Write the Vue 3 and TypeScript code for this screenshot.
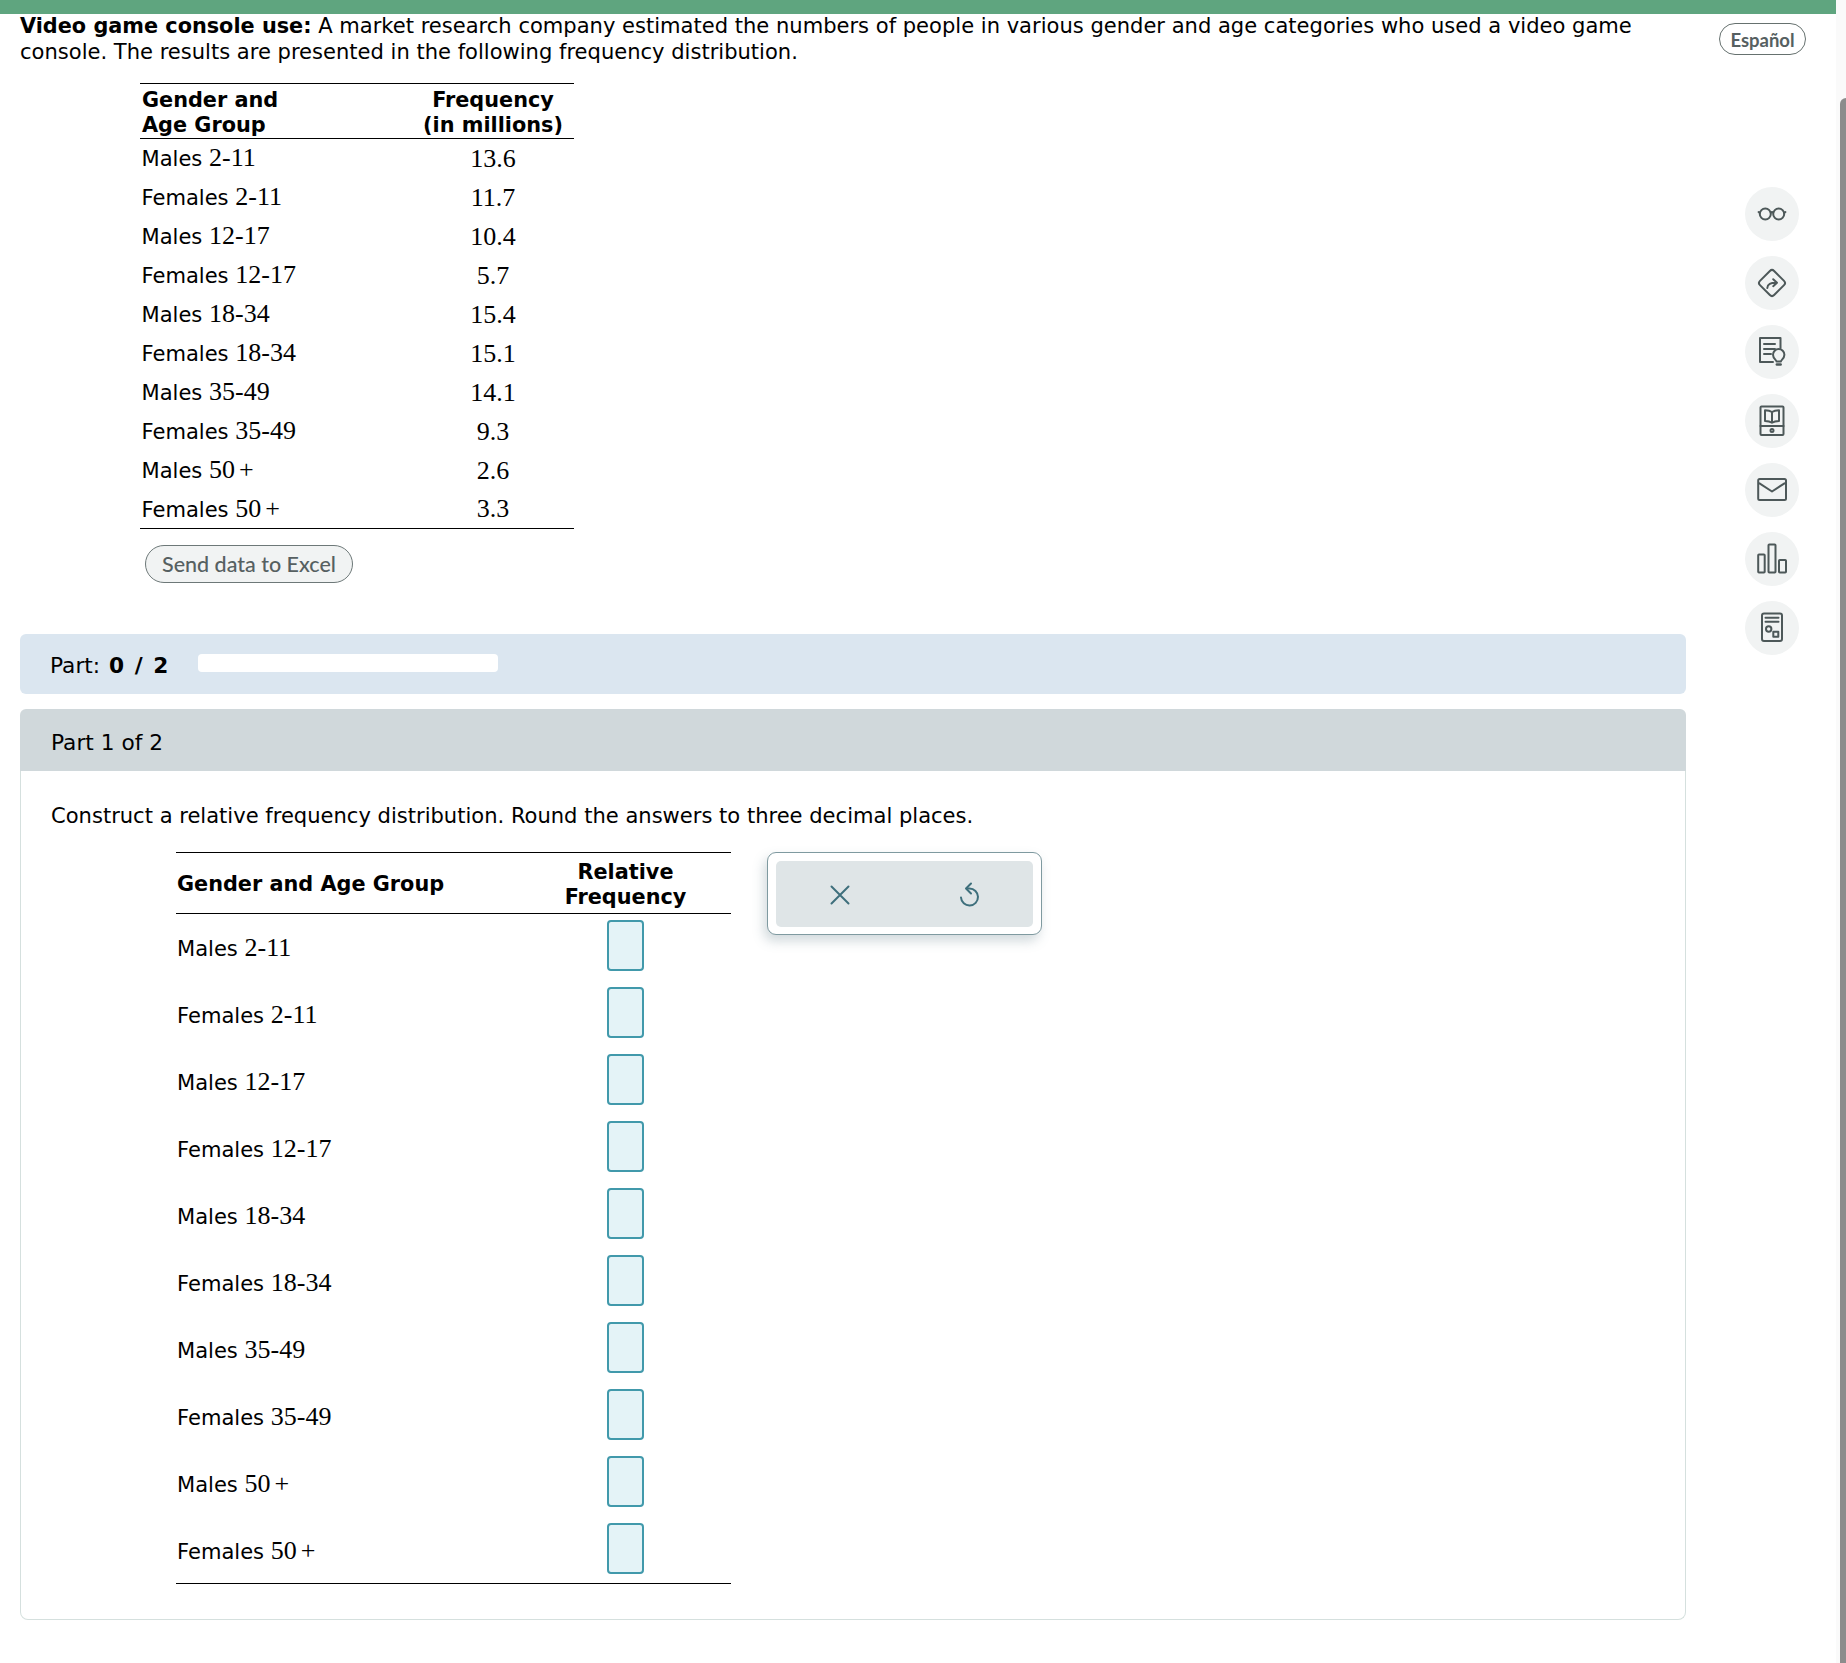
<script setup lang="ts">
interface Row { group: string; range: string; plus: boolean; freq: string }
const rows: Row[] = [
  { group: 'Males', range: '2-11', plus: false, freq: '13.6' },
  { group: 'Females', range: '2-11', plus: false, freq: '11.7' },
  { group: 'Males', range: '12-17', plus: false, freq: '10.4' },
  { group: 'Females', range: '12-17', plus: false, freq: '5.7' },
  { group: 'Males', range: '18-34', plus: false, freq: '15.4' },
  { group: 'Females', range: '18-34', plus: false, freq: '15.1' },
  { group: 'Males', range: '35-49', plus: false, freq: '14.1' },
  { group: 'Females', range: '35-49', plus: false, freq: '9.3' },
  { group: 'Males', range: '50', plus: true, freq: '2.6' },
  { group: 'Females', range: '50', plus: true, freq: '3.3' },
]
</script>

<template>
  <div class="screen">
    <div class="page">
      <div class="topbar"></div>
      <div class="columns">
        <main class="content">
          <p class="intro"><b>Video game console use:</b> A market research company estimated the numbers of people in various gender and age categories who used a video game console. The results are presented in the following frequency distribution.</p>

          <table class="data">
            <colgroup><col class="d1" /><col class="d2" /></colgroup>
            <thead>
              <tr>
                <th class="left">Gender and<br />Age Group</th>
                <th>Frequency<br />(in millions)</th>
              </tr>
            </thead>
            <tbody>
              <tr v-for="r in rows" :key="r.group + r.range">
                <td class="left">{{ r.group }} <span class="num">{{ r.range }}</span><span v-if="r.plus" class="num plus">+</span></td>
                <td class="center num">{{ r.freq }}</td>
              </tr>
            </tbody>
          </table>

          <button class="excel" type="button">Send data to Excel</button>

          <div class="progress">
            <span class="progress-label">Part: <b class="count">0 / 2</b></span>
            <div class="track"></div>
          </div>

          <section class="part">
            <div class="part-head">Part 1 of 2</div>
            <div class="part-body">
              <p class="prompt">Construct a relative frequency distribution. Round the answers to three decimal places.</p>
              <div class="answer">
                <table class="entry">
                  <colgroup><col class="e1" /><col class="e2" /></colgroup>
                  <thead>
                    <tr>
                      <th class="left">Gender and Age Group</th>
                      <th>Relative<br />Frequency</th>
                    </tr>
                  </thead>
                  <tbody>
                    <tr v-for="r in rows" :key="r.group + r.range">
                      <td class="left label">{{ r.group }} <span class="num">{{ r.range }}</span><span v-if="r.plus" class="num plus">+</span></td>
                      <td class="cell"><input class="box" type="text" :aria-label="r.group + ' ' + r.range" /></td>
                    </tr>
                  </tbody>
                </table>

                <div class="tools">
                  <div class="tools-inner">
                    <button class="tool" type="button" aria-label="Clear">
                      <svg width="24" height="24" viewBox="0 0 24 24" fill="none" stroke="#3e6f7c" stroke-width="2" stroke-linecap="round"><path d="M3.500 3.500 20.500 20.500M20.500 3.500 3.500 20.500" /></svg>
                    </button>
                    <button class="tool" type="button" aria-label="Undo">
                      <svg width="24" height="28" viewBox="0 0 24 28" fill="none" stroke="#3e6f7c" stroke-width="2" stroke-linecap="round" stroke-linejoin="round"><path d="M11 7.500h1.500a8.500 8.500 0 1 1-8.500 9" /><path d="M14 2.500 9 7.500l5 5" /></svg>
                    </button>
                  </div>
                </div>
              </div>
            </div>
          </section>
        </main>

        <aside class="side">
          <button class="lang" type="button">Español</button>
          <div class="icons">
            <button class="round" type="button" aria-label="Reader">
              <svg viewBox="0 0 32 32" class="ic"><circle cx="9.300" cy="16" r="5.500" /><circle cx="22.700" cy="16" r="5.500" /><path d="M14.800 14.600q1.200-1 2.400 0M3.800 14.800 2.600 14M28.200 14.800l1.200-.8" /></svg>
            </button>
            <button class="round" type="button" aria-label="Directions">
              <svg viewBox="0 0 32 32" class="ic"><rect x="6" y="6" width="20" height="20" rx="3" transform="rotate(45 16 16)" /><path d="M11.300 21q.2-5.600 9.500-5.200M17.200 12.200l3.800 3.600-3.800 3.400" /></svg>
            </button>
            <button class="round" type="button" aria-label="Hint">
              <svg viewBox="0 0 32 32" class="ic"><path d="M24.500 12V2H4v24h13" /><path d="M8 8h11M8 13h11M8 18h7" /><path d="M20.500 25.500c0-1.600-3.500-2.800-3.500-6.700a5.700 5.700 0 0 1 11.400 0c0 3.900-3.500 5.100-3.500 6.700z" /><path d="M20.800 28.500h3.900" stroke-width="2.400" /></svg>
            </button>
            <button class="round" type="button" aria-label="Textbook">
              <svg viewBox="0 0 32 32" class="ic"><rect x="4.500" y="1.500" width="23" height="28.500" rx="1" /><path d="M4.500 21h23" /><circle cx="16" cy="25.500" r="1.500" /><path d="M16 7c-2-1.500-4-1.800-7-1.800V16c3 0 5 .4 7 1.800 2-1.400 4-1.800 7-1.800V5.200c-3 0-5 .3-7 1.800zM16 7v10.800" /></svg>
            </button>
            <button class="round" type="button" aria-label="Message">
              <svg viewBox="0 0 32 32" class="ic"><rect x="2.200" y="5" width="27.800" height="21" rx="1.500" /><path d="M3.500 9.300 16 17.500l12.500-8.200" /></svg>
            </button>
            <button class="round" type="button" aria-label="Statistics">
              <svg viewBox="0 0 32 32" class="ic"><rect x="2.200" y="11.500" width="6.500" height="18" rx=".8" /><rect x="12.500" y="1.500" width="7" height="28" rx=".8" /><rect x="23" y="17" width="7" height="12.500" rx=".8" /></svg>
            </button>
            <button class="round" type="button" aria-label="Data">
              <svg viewBox="0 0 32 32" class="ic"><rect x="6" y="1.500" width="20" height="27.500" rx="2" /><path d="M9.500 5.800h13M9.500 9.800h13" /><circle cx="12.700" cy="17" r="2.700" /><rect x="17.300" y="19.700" width="5" height="5" /></svg>
            </button>
          </div>
        </aside>
      </div>
    </div>
    <div class="scrollbar"><div class="thumb"></div></div>
  </div>
</template>

<style>
html, body { margin: 0; background: #fff; }
</style>

<style scoped>
.screen {
  display: flex;
  width: 1846px;
  height: 1663px;
  overflow: hidden;
  background: #fff;
  color: #000;
  font-family: "DejaVu Sans", Verdana, sans-serif;
  font-size: 21.050px;
  line-height: 25px;
}
b, th { font-size: 20.800px; }
.page { width: 1836px; flex: none; }
.topbar { height: 14px; background: #5fa57f; }
.columns { display: flex; align-items: flex-start; }
.content { width: 1666px; margin-left: 20px; flex: none; }
.intro { margin: -1px 0 0; width: 1640px; }
.data {
  margin: 19px 0 0 120px;
  width: 434px;
  border-collapse: collapse;
  table-layout: fixed;
  border-top: 1.500px solid #000;
  border-bottom: 1.500px solid #000;
}
.d1 { width: 272px; }
.d2 { width: 162px; }
th { font-weight: 700; text-align: center; padding: 0; }
td { padding: 0; }
.left { text-align: left; }
.center { text-align: center; }
.data thead th { border-bottom: 1.500px solid #000; height: 55px; padding-top: 3px; box-sizing: border-box; }
.data thead th.left { padding-left: 2px; }
.data td { height: 39px; box-sizing: border-box; }
.data td.left { padding-left: 1.500px; }
.num { font-family: "Liberation Serif", "Times New Roman", serif; font-size: 26px; }
.plus { margin-left: 4px; }
.excel {
  display: block;
  margin: 16px 0 0 125px;
  width: 208px;
  height: 38px;
  padding: 0;
  border: 1px solid #6d7878;
  border-radius: 19px;
  background: #f1f3f3;
  color: #566061;
  font-family: Lato, "Open Sans", sans-serif;
  font-size: 21.500px;
  font-weight: 500;
}
.progress {
  display: flex;
  align-items: center;
  margin-top: 51px;
  height: 60px;
  padding-left: 30px;
  border-radius: 6px;
  background: #dbe6f0;
  font-size: 21.700px;
}
.progress-label { width: 148px; flex: none; padding-top: 2px; }
.count { font-size: 21.700px; letter-spacing: 1.500px; margin-left: 2px; }
.track {
  width: 300px;
  height: 18px;
  margin-top: -2px;
  border-radius: 4px;
  background: #fff;
}
.part { margin-top: 15px; }
.part-head {
  display: flex;
  align-items: center;
  height: 62px;
  padding-left: 31px;
  padding-top: 5px;
  box-sizing: border-box;
  border-radius: 6px 6px 0 0;
  background: #d0d8db;
  font-size: 21.700px;
}
.part-body {
  height: 849px;
  box-sizing: border-box;
  border: 1px solid #d5e0de;
  border-top: 0;
  border-radius: 0 0 8px 8px;
  padding: 32px 0 0 30px;
}
.prompt { margin: 0; }
.answer { display: flex; align-items: flex-start; margin: 24px 0 0 125px; }
.entry {
  width: 555px;
  flex: none;
  border-collapse: collapse;
  table-layout: fixed;
  border-top: 1.500px solid #000;
  border-bottom: 1.500px solid #000;
}
.e1 { width: 344px; }
.e2 { width: 211px; }
.entry thead th { height: 61px; border-bottom: 1.500px solid #000; padding-top: 3px; box-sizing: border-box; }
.entry thead th.left { padding-left: 1px; }
.entry td { height: 67px; box-sizing: border-box; }
.label { padding-left: 1px; padding-top: 2px; }
.cell { vertical-align: top; text-align: center; }
.box {
  display: block;
  box-sizing: border-box;
  width: 37px;
  height: 51px;
  margin: 6px auto 0;
  padding: 0;
  border: 2px solid #4199ab;
  border-radius: 4px;
  background: #e4f3f7;
}
.tools {
  width: 275px;
  height: 83px;
  box-sizing: border-box;
  margin-left: 36px;
  padding: 8px 8px 7px;
  border: 1px solid #7f9aa0;
  border-radius: 9px;
  background: #fff;
  box-shadow: -3px 6px 12px rgba(90, 120, 130, .28);
}
.tools-inner {
  display: flex;
  height: 100%;
  border-radius: 5px;
  background: #dfe5e7;
}
.tool {
  flex: 1;
  display: flex;
  align-items: center;
  justify-content: center;
  padding: 1px 0 0;
  border: 0;
  background: none;
}
.side { flex: 1; display: flex; flex-direction: column; align-items: flex-start; }
.lang {
  margin: 9px 0 0 33px;
  width: 87px;
  height: 32px;
  padding: 1px 0 0;
  border: 1px solid #66716f;
  border-radius: 16px;
  background: #fff;
  color: #566061;
  font-family: Lato, "Open Sans", sans-serif;
  font-size: 18.500px;
  font-weight: 700;
}
.icons { display: flex; flex-direction: column; gap: 15px; margin: 132px 0 0 59px; }
.round {
  display: flex;
  align-items: center;
  justify-content: center;
  width: 54px;
  height: 54px;
  padding: 0;
  border: 0;
  border-radius: 50%;
  background: #f1f3f3;
}
.ic {
  width: 32px;
  height: 32px;
  fill: none;
  stroke: #4d5859;
  stroke-width: 2;
  stroke-linecap: round;
  stroke-linejoin: round;
}
.scrollbar { flex: 1; background: #fafafa; }
.thumb {
  width: 6px;
  height: 1565px;
  margin: 98px 0 0 4px;
  border-radius: 6px 0 0 0;
  background: #8c8c8c;
}
</style>
